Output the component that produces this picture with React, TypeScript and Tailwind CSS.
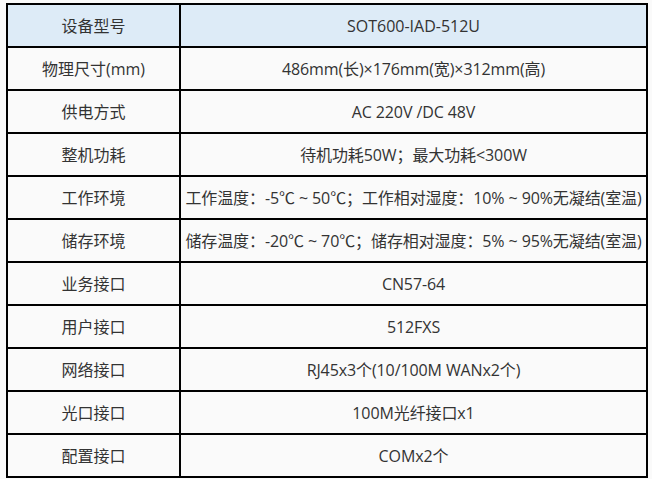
const rows: [string, string][] = [
  ["物理尺寸(mm)", "486mm(长)×176mm(宽)×312mm(高)"],
  ["供电方式", "AC 220V /DC 48V"],
  ["整机功耗", "待机功耗50W；最大功耗<300W"],
  ["工作环境", "工作温度：-5℃ ~ 50℃；工作相对湿度：10% ~ 90%无凝结(室温)"],
  ["储存环境", "储存温度：-20℃ ~ 70℃；储存相对湿度：5% ~ 95%无凝结(室温)"],
  ["业务接口", "CN57-64"],
  ["用户接口", "512FXS"],
  ["网络接口", "RJ45x3个(10/100M WANx2个)"],
  ["光口接口", "100M光纤接口x1"],
  ["配置接口", "COMx2个"],
];

export default function App() {
  return (
    <div
      className="w-[652px] h-[479px] bg-[#fafafa] pt-[3px] pl-[6px] text-[#333333] text-[16px]"
      style={{ fontFamily: '"Open Sans", "Noto Sans CJK SC", sans-serif' }}
    >
      <table className="w-[642px] border-collapse border-2 border-black table-fixed">
        <colgroup>
          <col className="w-[173px]" />
          <col />
        </colgroup>
        <tbody>
          <tr className="h-[43px] bg-[#ddebf7]">
            <td className="border-2 border-black text-center">设备型号</td>
            <td className="border-2 border-black text-center">SOT600-IAD-512U</td>
          </tr>
          {rows.map(([k, v]) => (
            <tr key={k} className="h-[43px] bg-[#fafafa]">
              <td className="border-2 border-black text-center">{k}</td>
              <td className="border-2 border-black text-center whitespace-nowrap tracking-[-0.1px]">{v}</td>
            </tr>
          ))}
        </tbody>
      </table>
    </div>
  );
}
